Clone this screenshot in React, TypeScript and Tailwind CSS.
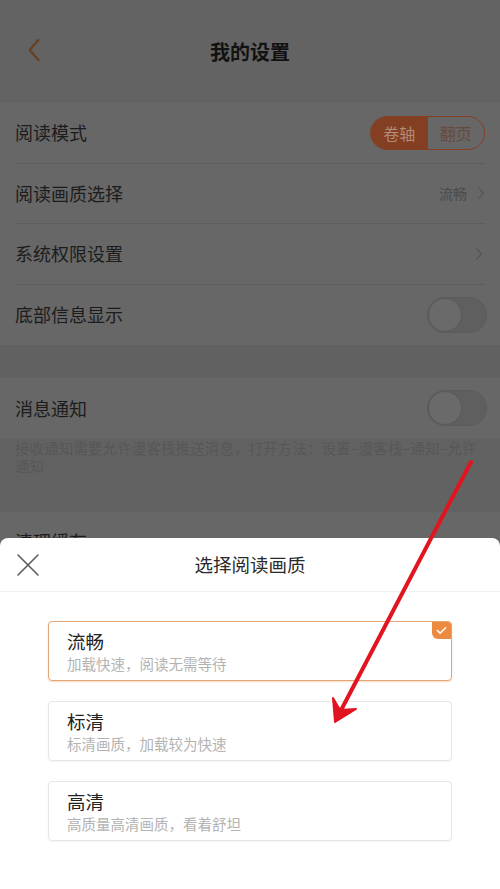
import React from "react";

const font = { fontFamily: '"Noto Sans CJK SC", "Noto Sans", sans-serif' };

const Chevron: React.FC<{ className?: string }> = ({ className }) => (
  <svg viewBox="0 0 10 18" className={className} fill="none">
    <path d="M2 2l6 7-6 7" stroke="currentColor" strokeWidth="1.6" strokeLinecap="round" strokeLinejoin="round" />
  </svg>
);

const Toggle = () => (
  <div className="relative h-[36px] w-[60px] rounded-full bg-[#5f5f5f] border border-[#5b5b5b]">
    <div className="absolute left-0 top-0 h-[34px] w-[34px] rounded-full bg-[#6a6a6a] border border-[#5a5a5a]" />
  </div>
);

const Row: React.FC<{ label: string; right?: React.ReactNode; divider?: boolean }> = ({
  label,
  right,
  divider,
}) => (
  <div className="px-[15px]">
    <div className={`flex h-[60.5px] items-center justify-between ${divider ? "border-b border-[#5d5d5d]" : ""}`}>
      <span className="text-[18px] text-[#1c1c1c]">{label}</span>
      {right}
    </div>
  </div>
);

const Option: React.FC<{ title: string; desc: string; selected?: boolean }> = ({ title, desc, selected }) => (
  <div
    className={`relative h-[60px] rounded-[4px] border px-[18px] pt-[6px] ${
      selected ? "border-[#e2a575] shadow-[0_1px_2px_rgba(230,150,90,0.35)]" : "border-[#e6e6e6] shadow-[0_1px_2px_rgba(0,0,0,0.05)]"
    }`}
  >
    <div className="text-[18.5px] leading-[26px] text-[#222]">{title}</div>
    <div className="text-[14.5px] leading-[20px] text-[#b3b3b3]">{desc}</div>
    {selected && (
      <div className="absolute right-0 top-0 flex h-[17px] w-[19px] items-center justify-center rounded-bl-[6px] rounded-tr-[3px] bg-[#ec8a42]">
        <svg viewBox="0 0 12 10" className="h-[9px] w-[11px]" fill="none">
          <path d="M1.5 5l3 3 6-6" stroke="#fff" strokeWidth="1.8" strokeLinecap="round" strokeLinejoin="round" />
        </svg>
      </div>
    )}
  </div>
);

export default function App() {
  return (
    <div className="relative h-[889px] w-[500px] overflow-hidden bg-[#616161]" style={font}>
      {/* header */}
      <div className="relative flex h-[103px] items-center justify-center bg-[#636363]">
        <Chevron className="absolute left-[26px] top-[37px] h-[26px] w-[16px] text-[#6a3f20] [transform:scaleX(-1)]" />
        <span className="text-[20px] font-bold text-[#121212]">我的设置</span>
      </div>

      {/* settings */}
      <div className="bg-[#676767]">
        <Row
          label="阅读模式"
          divider
          right={
            <div className="flex h-[34px] w-[115px] overflow-hidden rounded-full border-[1.5px] border-[#853f22] text-[16px]">
              <div className="flex flex-1 items-center justify-center bg-[#843f22] text-[#b08c7a]">卷轴</div>
              <div className="flex flex-1 items-center justify-center text-[#654b3f]">翻页</div>
            </div>
          }
        />
        <Row
          label="阅读画质选择"
          divider
          right={
            <div className="flex items-center gap-[10px] text-[14px] text-[#4b4b4b]">
              <span>流畅</span>
              <Chevron className="h-[14px] w-[8px] text-[#565656]" />
            </div>
          }
        />
        <Row label="系统权限设置" divider right={<Chevron className="mr-[2px] h-[14px] w-[8px] text-[#565656]" />} />
        <Row label="底部信息显示" right={<div className="-mr-[2px]"><Toggle /></div>} />
      </div>

      <div className="h-[33px]" />

      <div className="bg-[#676767]">
        <Row label="消息通知" right={<div className="-mr-[2px]"><Toggle /></div>} />
      </div>
      <div className="h-[73px] bg-[#626262] px-[15px] text-[14.5px] leading-[18px] text-[#575757]">
        <div className="whitespace-nowrap tracking-[0.1px]">接收通知需要允许漫客栈推送消息，打开方法：设置–漫客栈–通知–允许</div>
        <div>通知</div>
      </div>
      <div className="bg-[#676767]">
        <Row label="清理缓存" />
      </div>

      {/* bottom sheet */}
      <div className="absolute bottom-0 left-0 top-[538px] w-full rounded-t-[8px] bg-white">
        <div className="relative flex h-[54px] items-center justify-center border-b border-[#f0f0f0]">
          <svg viewBox="0 0 24 24" className="absolute left-[16px] top-[15px] h-[24px] w-[24px]" fill="none">
            <path d="M2 2l20 20M22 2L2 22" stroke="#5a5a5a" strokeWidth="1.6" strokeLinecap="round" />
          </svg>
          <span className="text-[18.5px] text-[#2a2a2a]">选择阅读画质</span>
        </div>
        <div className="flex flex-col gap-[20px] px-[48px] pt-[29px]">
          <Option title="流畅" desc="加载快速，阅读无需等待" selected />
          <Option title="标清" desc="标清画质，加载较为快速" />
          <Option title="高清" desc="高质量高清画质，看着舒坦" />
        </div>
      </div>

      {/* red arrow annotation */}
      <svg className="pointer-events-none absolute left-0 top-0 h-[889px] w-[500px]" viewBox="0 0 500 889">
        <line x1="471" y1="462" x2="338" y2="716" stroke="#e2141f" strokeWidth="4" strokeLinecap="round" />
        <path d="M335 722 L333 698 L340 710 L356 709 Z" fill="#e2141f" stroke="#e2141f" strokeWidth="2" strokeLinejoin="round" />
      </svg>
    </div>
  );
}
